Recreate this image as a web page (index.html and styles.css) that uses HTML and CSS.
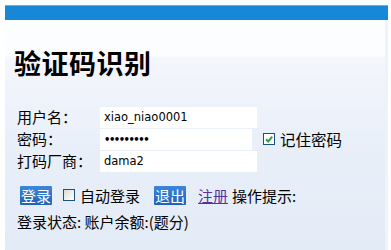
FILE: index.html
```html
<!DOCTYPE html>
<html lang="zh">
<head>
<meta charset="utf-8">
<link rel="stylesheet" href="styles.css">
</head>
<body>
<div class="page">
  <div class="topbar"></div>
  <div class="content">
    <h1 class="title">验证码识别</h1>
    <div class="form">
      <label class="lbl">用户名：</label>
      <div class="field f1">xiao_niao0001</div>
      <div></div>
      <label class="lbl">密码：</label>
      <div class="field f2">•••••••••</div>
      <div class="remember"><span class="cb checked"><svg viewBox="0 0 10 10" width="10" height="10"><path d="M2 5.2 L4.2 7.4 L8.2 2.6" fill="none" stroke="#22a83a" stroke-width="2"/></svg></span>记住密码</div>
      <label class="lbl">打码厂商：</label>
      <div class="field f3">dama2</div>
      <div></div>
    </div>
    <div class="actions">
      <span class="btn">登录</span>
      <span class="cb"></span><span class="auto">自动登录</span>
      <span class="btn">退出</span>
      <a class="link" href="#">注册</a><span class="tip">操作提示:</span>
    </div>
    <div class="status">登录状态: 账户余额:(题分)</div>
  </div>
</div>
</body>
</html>
```
FILE: styles.css
```css
html, body {
  margin: 0;
  padding: 0;
  background: #ffffff;
}
body {
  font-family: "Noto Sans CJK SC", "Liberation Sans", sans-serif;
  font-size: 15px;
  color: #000;
}
.page {
  margin: 5px 0 0 5px;
  width: 383px;
  height: 245px;
  display: flex;
  flex-direction: column;
}
.topbar {
  height: 14px;
  background: #1788d8;
  border-top: 1px solid #5fb0ea;
}
.content {
  flex: 1;
  padding: 26px 0 0 9px;
  background: linear-gradient(#fdfeff 0, #fbfdff 36px, #f6f6fd 37px, #f0f3fb 70px, #e8eff9 130px, #e3ebf6 100%);
  border-right: 3px solid #eef3fa;
}
.title {
  margin: 0;
  font-size: 27px;
  line-height: 34px;
  font-weight: bold;
  letter-spacing: 0.5px;
  font-family: "Noto Sans CJK SC", serif;
}
.form {
  margin-top: 26px;
  margin-left: 3px;
  display: grid;
  grid-template-columns: 83px 157px auto;
  grid-auto-rows: 22px;
  row-gap: 0;
  align-items: center;
}
.lbl {
  font-size: 15px;
  line-height: 22px;
}
.field {
  background: #ffffff;
  height: 21px;
  line-height: 21px;
  padding-left: 4px;
  font-family: "DejaVu Sans", sans-serif;
  font-size: 11.5px;
  box-sizing: border-box;
}
.f2 {
  width: 152px;
  font-size: 10px;
  letter-spacing: -1.5px;
  font-weight: bold;
}
.remember {
  display: flex;
  align-items: center;
  padding-left: 6px;
  font-size: 15.5px;
}
.cb {
  display: inline-flex;
  align-items: center;
  justify-content: center;
  width: 10px;
  height: 10px;
  border: 1px solid #1c5180;
  background: linear-gradient(135deg, #dcdcd6, #ffffff);
  margin-right: 5px;
}
.cb.checked {
  background: #fff;
}
.actions {
  margin-top: 12px;
  margin-left: 6px;
  display: flex;
  align-items: center;
  height: 22px;
}
.btn {
  background: linear-gradient(#3c86dc, #1e62b8);
  color: #ffffff;
  font-size: 15px;
  line-height: 19px;
  height: 19px;
  padding: 0 1px;
  border-radius: 1px;
  margin-right: 11px;
}
.auto {
  margin-right: 14px;
}
.link {
  color: #5a2fa0;
  text-decoration: underline;
  margin-left: 1px;
  margin-right: 4px;
}
.status {
  margin-top: 5px;
  margin-left: 3px;
  line-height: 22px;
}
```
